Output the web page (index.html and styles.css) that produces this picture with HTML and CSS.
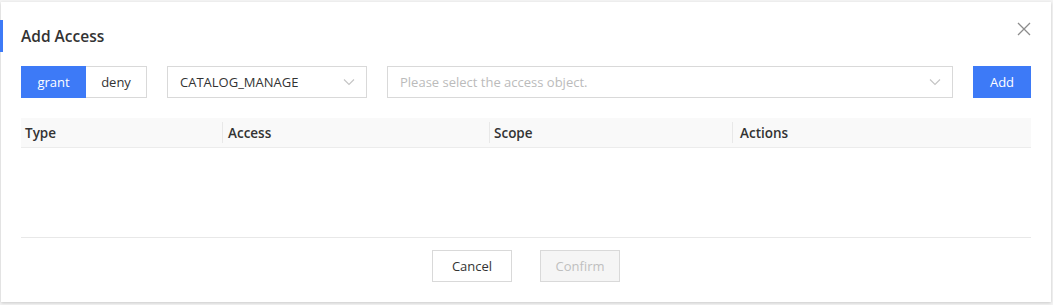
FILE: index.html
```html
<!DOCTYPE html>
<html lang="en">
<head>
  <meta charset="UTF-8">
  <meta name="viewport" content="width=device-width, initial-scale=1.0">
  <title>Add Access</title>
  <link rel="stylesheet" href="styles.css">
</head>
<body>
  <div class="backdrop">
    <div class="modal">
      <div class="modal-header">
        <h2 class="modal-title">Add Access</h2>
        <span class="modal-close">
          <svg width="14" height="14" viewBox="0 0 14 14"><path d="M1 1L13 13M13 1L1 13" stroke="#8c8c8c" stroke-width="1.3" fill="none"/></svg>
        </span>
      </div>

      <div class="toolbar">
        <div class="switch">
          <button class="switch-btn active">grant</button>
          <button class="switch-btn">deny</button>
        </div>
        <div class="select select-access">
          <span class="select-value">CATALOG_MANAGE</span>
          <svg class="chevron" width="12" height="8" viewBox="0 0 12 8"><path d="M1 1.5L6 6.5L11 1.5" stroke="#c4c4c4" stroke-width="1.1" fill="none"/></svg>
        </div>
        <div class="select select-object">
          <span class="select-placeholder">Please select the access object.</span>
          <svg class="chevron" width="12" height="8" viewBox="0 0 12 8"><path d="M1 1.5L6 6.5L11 1.5" stroke="#c4c4c4" stroke-width="1.1" fill="none"/></svg>
        </div>
        <button class="btn btn-primary">Add</button>
      </div>

      <div class="table">
        <div class="table-head">
          <div class="th col-type">Type</div>
          <div class="th col-access">Access</div>
          <div class="th col-scope">Scope</div>
          <div class="th col-actions">Actions</div>
        </div>
        <div class="table-body"></div>
      </div>

      <div class="modal-footer">
        <button class="btn btn-default">Cancel</button>
        <button class="btn btn-disabled" disabled>Confirm</button>
      </div>
    </div>
  </div>
</body>
</html>
```

FILE: styles.css
```css
* {
  box-sizing: border-box;
}

body {
  margin: 0;
  background-color: #f4f4f4;
  font-family: "Open Sans", "Noto Sans", Arial, sans-serif;
  font-size: 13px;
  color: #333;
}

.backdrop {
  padding: 2px 2px 0 1px;
  height: 305px;
}

.modal {
  position: relative;
  width: 1050px;
  height: 300px;
  background-color: #fff;
  box-shadow: 0 1px 3px rgba(0, 0, 0, 0.18);
  padding: 0 19px 0 20px;
  display: flex;
  flex-direction: column;
}

.modal-header {
  height: 64px;
  padding-top: 18px;
}

.modal-title {
  position: relative;
  margin: 0;
  height: 32px;
  line-height: 32px;
  font-size: 15.5px;
  font-weight: 600;
  color: #333;
}

.modal-title::before {
  content: "";
  position: absolute;
  left: -21px;
  top: 0;
  width: 3px;
  height: 32px;
  background-color: #3d7af7;
}

.modal-close {
  position: absolute;
  top: 20px;
  right: 20px;
  width: 14px;
  height: 14px;
  cursor: pointer;
}

.modal-close svg {
  display: block;
}

.toolbar {
  display: flex;
  align-items: center;
  height: 32px;
}

.switch {
  display: flex;
  margin-right: 20px;
}

.switch-btn {
  height: 32px;
  padding: 0;
  font-family: inherit;
  font-size: 13px;
  border: 1px solid #d9d9d9;
  background-color: #fff;
  color: #333;
  cursor: pointer;
}

.switch-btn:first-child {
  width: 65px;
}

.switch-btn:last-child {
  width: 61px;
  border-left: none;
}

.switch-btn.active {
  background-color: #3d7af7;
  border-color: #3d7af7;
  color: #fff;
}

.select {
  display: flex;
  align-items: center;
  justify-content: space-between;
  height: 32px;
  border: 1px solid #d9d9d9;
  padding: 0 11px 0 12px;
  background-color: #fff;
}

.select-access {
  width: 200px;
  margin-right: 20px;
}

.select-object {
  width: 566px;
  margin-right: 20px;
}

.select-value {
  color: #333;
}

.select-placeholder {
  color: #bbb;
}

.chevron {
  display: block;
}

.btn {
  height: 32px;
  padding: 0;
  font-family: inherit;
  font-size: 13px;
  cursor: pointer;
}

.btn-primary {
  width: 58px;
  border: none;
  background-color: #3d7af7;
  color: #fff;
}

.btn-default {
  width: 80px;
  border: 1px solid #d9d9d9;
  background-color: #fff;
  color: #333;
}

.btn-disabled {
  width: 80px;
  border: 1px solid #d9d9d9;
  background-color: #f5f5f5;
  color: #bfbfbf;
  cursor: not-allowed;
}

.table {
  margin-top: 20px;
  width: 1010px;
}

.table-head {
  display: flex;
  height: 30px;
  background-color: #f9f9f9;
  border-bottom: 1px solid #ececec;
}

.th {
  position: relative;
  display: flex;
  align-items: center;
  font-size: 13.5px;
  font-weight: 600;
  color: #333;
}

.th + .th::before {
  content: "";
  position: absolute;
  left: 0;
  top: 4px;
  bottom: 4px;
  width: 1px;
  background-color: #e8e8e8;
}

.col-type {
  width: 201px;
  padding-left: 4px;
}

.col-access {
  width: 267px;
  padding-left: 6px;
}

.col-scope {
  width: 243px;
  padding-left: 5px;
}

.col-actions {
  flex: 1;
  padding-left: 8px;
}

.table-body {
  height: 89px;
}

.modal-footer {
  width: 1010px;
  border-top: 1px solid #e8e8e8;
  padding-top: 12px;
  display: flex;
  justify-content: center;
  gap: 28px;
}
```
